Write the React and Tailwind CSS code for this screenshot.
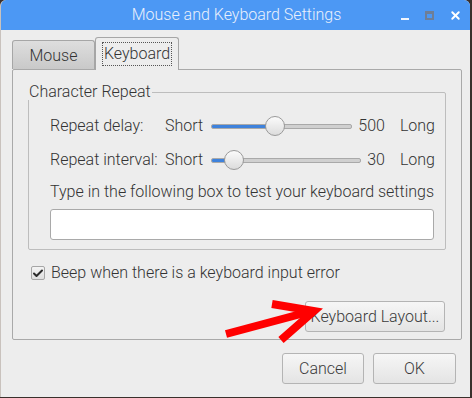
import { Check, X } from "lucide-react";

function Slider({ value, max = 100 }) {
  const pct = (value / max) * 100;
  return (
    <div className="relative flex-1 h-[20px] flex items-center">
      <div className="w-full h-[5px] rounded-[2px] border border-[#a9a9a9] bg-[#d0d0d0] overflow-hidden">
        <div className="h-full bg-[#3e82dc]" style={{ width: `${pct}%` }} />
      </div>
      <div
        className="absolute top-0 w-[20px] h-[20px] -ml-[10px] rounded-full border border-[#9a9a9a] bg-gradient-to-b from-[#fbfbfb] to-[#dcdcdc]"
        style={{ left: `${pct}%` }}
      />
    </div>
  );
}

function RepeatRow({ label, value, pct }) {
  return (
    <div className="flex items-center h-[20px]">
      <span className="w-[115px]">{label}</span>
      <span>Short</span>
      <div className="ml-[8px] flex-1 flex">
        <Slider value={pct} />
      </div>
      <span className="ml-[6px]">{value}</span>
      <span className="ml-[15px]">Long</span>
    </div>
  );
}

function Btn({ children, className = "" }) {
  return (
    <button
      type="button"
      className={`h-[31px] rounded-[3px] border border-[#b4b4b4] bg-gradient-to-b from-[#f6f6f6] to-[#e4e4e4] text-[#3a3a3a] ${className}`}
    >
      {children}
    </button>
  );
}

export default function App() {
  return (
    <div
      className="relative w-[472px] h-[398px] bg-[#3a302c] text-[16px] font-light text-[#333333]"
      style={{ fontFamily: "Roboto, 'Noto Sans', sans-serif" }}
    >
      <div className="absolute left-0 top-0 w-[470px] h-[397px] flex flex-col rounded-t-[6px] overflow-hidden border-l border-[#c9c2bd] bg-[#ededed]">
        {/* title bar */}
        <div className="relative h-[30px] shrink-0 bg-[#4c98f4] flex items-center justify-center">
          <span className="text-[16px] text-[#e9f0fc] ml-[2px]">Mouse and Keyboard Settings</span>
          <div className="absolute right-[8px] top-0 h-full flex items-center gap-[14px]">
            <div className="w-[12px] h-[12px] flex items-end">
              <div className="w-[8px] h-[2px] bg-[#f2f6fd] ml-[2px] mb-[1px]" />
            </div>
            <div className="w-[9px] h-[9px] border-[2px] border-[#6e7e96] border-t-[3px]" />
            <X size={13} strokeWidth={3.5} className="text-white ml-[1px]" />
          </div>
        </div>

        {/* body */}
        <div className="flex-1 flex flex-col px-[11px] pt-[7px]">
          {/* tabs */}
          <div className="flex items-end h-[32px] relative z-10">
            <div className="w-[83px] h-[29px] rounded-t-[3px] border border-b-0 border-[#a6a6a6] bg-gradient-to-b from-[#dedede] to-[#c9c9c9] flex items-center justify-center pt-[2px]">
              Mouse
            </div>
            <div className="w-[84px] h-[33px] -mb-px rounded-t-[3px] border border-b-0 border-[#a6a6a6] bg-[#ededed] flex items-center justify-center">
              <span className="border border-dotted border-[#555] px-[1px] leading-[22px]">Keyboard</span>
            </div>
          </div>

          {/* panel */}
          <div className="h-[271px] w-[450px] border border-[#a9a9a9] rounded-[2px] px-[15px] pt-[14px]">
            <fieldset className="border border-[#bdbdbd] rounded-[2px] h-[166px] pl-[21px] pr-[10px]">
              <legend className="px-[1px] -ml-[22px] leading-[16px]">Character Repeat</legend>
              <div className="flex flex-col pt-[16px]">
                <RepeatRow label="Repeat delay:" value="500" pct={45} />
                <div className="h-[14px]" />
                <RepeatRow label="Repeat interval:" value="30" pct={15} />
                <div className="mt-[12px] leading-[20px] whitespace-nowrap">
                  Type in the following box to test your keyboard settings
                </div>
                <div className="mt-[7px] mr-[1px] h-[31px] rounded-[3px] border border-[#a9a9a9] bg-white" />
              </div>
            </fieldset>

            <div className="flex items-center mt-[11px] ml-[3px]">
              <div className="w-[14px] h-[14px] rounded-[2px] border border-[#a6a6a6] bg-gradient-to-b from-[#f4f4f4] to-[#dedede] flex items-center justify-center">
                <Check size={13} strokeWidth={4} className="text-[#2a2a2a]" />
              </div>
              <span className="ml-[6px]">Beep when there is a keyboard input error</span>
            </div>

            <div className="flex justify-end mt-[16px] mr-[1px]">
              <Btn className="w-[140px]">Keyboard Layout...</Btn>
            </div>
          </div>

          {/* dialog buttons */}
          <div className="flex justify-end gap-[9px] mt-[13px] mr-[3px]">
            <Btn className="w-[82px]">Cancel</Btn>
            <Btn className="w-[83px]">OK</Btn>
          </div>
        </div>
      </div>

      {/* annotation arrow */}
      <svg className="absolute left-0 top-0 pointer-events-none" width="472" height="398">
        <g stroke="#ff0000" strokeWidth="8" strokeLinecap="butt" fill="none">
          <line x1="226" y1="334" x2="312" y2="311" />
          <polyline points="272,304 314,311 281,340" strokeLinejoin="miter" />
        </g>
      </svg>
    </div>
  );
}
